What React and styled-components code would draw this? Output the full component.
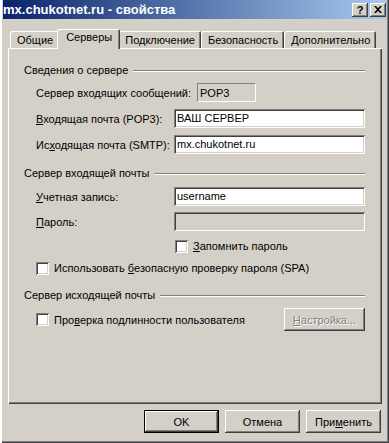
import React from 'react';
import styled, { createGlobalStyle, css } from 'styled-components';

const GlobalStyle = createGlobalStyle`
  html, body { margin: 0; padding: 0; background: #d4d0c8; }
  body {
    font-family: "Liberation Sans", Arial, sans-serif;
    font-size: 11px;
    color: #000;
  }
`;

const raised = css`
  box-shadow: inset -1px -1px #404040, inset 1px 1px #fff, inset -2px -2px #808080, inset 2px 2px #d4d0c8;
`;

const sunken = css`
  box-shadow: inset 1px 1px #808080, inset -1px -1px #fff, inset 2px 2px #404040, inset -2px -2px #d4d0c8;
`;

const Window = styled.div`
  width: 389px;
  height: 443px;
  box-sizing: border-box;
  padding: 0 2px 0 3px;
  background: #d4d0c8;
  box-shadow: inset 2px 0 #fff, inset -1px -1px #404040, inset -2px -2px #808080;
  display: flex;
  flex-direction: column;
`;

const TitleBar = styled.div`
  height: 19px;
  background: linear-gradient(90deg, #0a246a, #a6caf0);
  display: flex;
  align-items: center;
  padding: 0 1px 0 0;
  gap: 2px;
`;

const Title = styled.div`
  flex: 1;
  color: #fff;
  font-weight: bold;
  font-size: 13px;
`;

const TitleButton = styled.div`
  width: 16px;
  height: 14px;
  background: #d4d0c8;
  ${raised};
  display: flex;
  align-items: center;
  justify-content: center;
  font-weight: bold;
  font-size: 11px;
  line-height: 14px;
`;

const Body = styled.div`
  display: flex;
  flex-direction: column;
  padding: 10px 0 0 5px;
`;

const TabStrip = styled.div`
  display: flex;
  align-items: flex-end;
  height: 19px;
  padding-left: 2px;
  position: relative;
  z-index: 1;
`;

const Tab = styled.div`
  height: ${p => (p.$active ? 20 : 17)}px;
  margin: ${p => (p.$active ? '0 -2px -1px -2px' : '0')};
  padding: ${p => (p.$active ? '0 8px 0 9px' : '0 6px 0 7px')};
  background: #d4d0c8;
  box-shadow: inset 1px 1px #fff, inset -1px 0 #404040, inset -2px 0 #808080;
  border-radius: 2px 2px 0 0;
  line-height: ${p => (p.$active ? 17 : 18)}px;
  white-space: nowrap;
  position: relative;
  z-index: ${p => (p.$active ? 2 : 1)};
`;

const Panel = styled.div`
  width: 374px;
  height: 356px;
  box-sizing: border-box;
  padding: 16px 17px 0 16px;
  box-shadow: inset 1px 1px #fff, inset -1px -1px #404040, inset -2px -2px #808080;
  display: flex;
  flex-direction: column;
`;

const Group = styled.div`
  display: flex;
  flex-direction: column;
  margin-top: ${p => p.$mt || 0}px;
`;

const GroupHeader = styled.div`
  display: flex;
  align-items: center;
  height: 13px;
  line-height: 13px;
  white-space: nowrap;
`;

const Etched = styled.div`
  flex: 1;
  margin-left: 5px;
  border-top: 1px solid #808080;
  border-bottom: 1px solid #fff;
`;

const GroupBody = styled.div`
  display: flex;
  flex-direction: column;
  padding-left: 12px;
`;

const Row = styled.div`
  display: flex;
  align-items: center;
  height: ${p => p.$h || 19}px;
  margin-top: ${p => p.$mt || 0}px;
  padding-left: ${p => p.$indent || 0}px;
  white-space: nowrap;
`;

const Label = styled.div`
  width: ${p => p.$w || 138}px;
  flex: none;
`;

const TextBox = styled.div`
  width: 191px;
  height: 19px;
  box-sizing: border-box;
  padding: 0 3px;
  line-height: 19px;
  background: ${p => (p.$disabled ? '#d4d0c8' : '#fff')};
  ${sunken};
`;

const StaticBox = styled.div`
  width: 59px;
  height: 19px;
  box-sizing: border-box;
  padding: 0 2px;
  line-height: 18px;
  border-top: 1px solid #808080;
  border-left: 1px solid #808080;
  border-right: 1px solid #fff;
  border-bottom: 1px solid #fff;
`;

const Check = styled.span`
  width: 13px;
  height: 13px;
  flex: none;
  background: #fff;
  ${sunken};
  margin-right: 5px;
`;

const Button = styled.div`
  width: ${p => p.$w || 75}px;
  height: 23px;
  box-sizing: border-box;
  display: flex;
  align-items: center;
  justify-content: center;
  background: #d4d0c8;
  ${p =>
    p.$default
      ? css`box-shadow: inset 0 0 0 1px #000, inset -2px -2px #404040, inset 2px 2px #fff, inset -3px -3px #808080;`
      : raised};
  color: ${p => (p.$disabled ? '#808080' : '#000')};
  text-shadow: ${p => (p.$disabled ? '1px 1px #fff' : 'none')};
  white-space: nowrap;
`;

const Spacer = styled.div`
  flex: 1;
`;

const ButtonRow = styled.div`
  display: flex;
  justify-content: flex-end;
  gap: 6px;
  width: 374px;
  box-sizing: border-box;
  padding-right: 1px;
  margin-top: 6px;
`;

const U = styled.span`
  text-decoration: underline;
`;

export default function App() {
  return (
    <>
      <GlobalStyle />
      <Window>
        <TitleBar>
          <Title>mx.chukotnet.ru - свойства</Title>
          <TitleButton>?</TitleButton>
          <TitleButton>
            <svg width="8" height="7" viewBox="0 0 8 7">
              <path d="M0 0h2l2 2.2L6 0h2L5 3.5 8 7H6L4 4.8 2 7H0l3-3.5z" fill="#000" />
            </svg>
          </TitleButton>
        </TitleBar>
        <Body>
          <TabStrip>
            <Tab>Общие</Tab>
            <Tab $active>Серверы</Tab>
            <Tab>Подключение</Tab>
            <Tab>Безопасность</Tab>
            <Tab>Дополнительно</Tab>
          </TabStrip>
          <Panel>
            <Group>
              <GroupHeader>Сведения о сервере<Etched /></GroupHeader>
              <GroupBody>
                <Row $mt={6}>
                  <Label $w={161}>Сервер вхо<U>д</U>ящих сообщений:</Label>
                  <StaticBox>POP3</StaticBox>
                </Row>
                <Row $mt={7}>
                  <Label><U>В</U>ходящая почта (POP3):</Label>
                  <TextBox>ВАШ СЕРВЕР</TextBox>
                </Row>
                <Row $mt={7}>
                  <Label>Ис<U>х</U>одящая почта (SMTP):</Label>
                  <TextBox>mx.chukotnet.ru</TextBox>
                </Row>
              </GroupBody>
            </Group>
            <Group $mt={13}>
              <GroupHeader>Сервер входящей почты<Etched /></GroupHeader>
              <GroupBody>
                <Row $mt={7}>
                  <Label><U>У</U>четная запись:</Label>
                  <TextBox>username</TextBox>
                </Row>
                <Row $mt={6}>
                  <Label><U>П</U>ароль:</Label>
                  <TextBox $disabled />
                </Row>
                <Row $mt={7} $h={16} $indent={139}>
                  <Check /><span><U>З</U>апомнить пароль</span>
                </Row>
                <Row $mt={6} $h={16}>
                  <Check /><span>Использовать <U>б</U>езопасную проверку пароля (SPA)</span>
                </Row>
              </GroupBody>
            </Group>
            <Group $mt={13}>
              <GroupHeader>Сервер исходящей почты<Etched /></GroupHeader>
              <GroupBody>
                <Row $mt={6} $h={23}>
                  <Check /><span>Про<U>в</U>ерка подлинности пользователя</span>
                  <Spacer />
                  <Button $w={81} $disabled><U>Н</U>астройка...</Button>
                </Row>
              </GroupBody>
            </Group>
          </Panel>
          <ButtonRow>
            <Button $default>OK</Button>
            <Button>Отмена</Button>
            <Button>При<U>м</U>енить</Button>
          </ButtonRow>
        </Body>
      </Window>
    </>
  );
}
